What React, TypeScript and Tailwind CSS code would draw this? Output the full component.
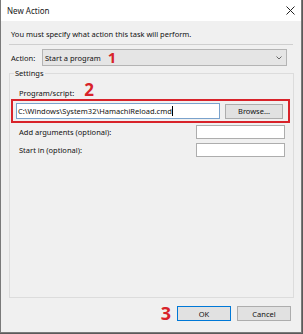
import React from 'react';

const font = { fontFamily: '"Noto Sans", "Open Sans", sans-serif' };

function CloseIcon() {
    return (
        <svg width="9" height="9" viewBox="0 0 9 9" className="block">
            <path d="M0.5 0.5 L8.5 8.5 M8.5 0.5 L0.5 8.5" stroke="#222" strokeWidth="1" fill="none" />
        </svg>
    );
}

function Chevron() {
    return (
        <svg width="6" height="4" viewBox="0 0 6 4" className="block">
            <path d="M0.5 0.5 L3 3 L5.5 0.5" stroke="#666" strokeWidth="1" fill="none" />
        </svg>
    );
}

export default function App() {
    return (
        <div className="w-[303px] h-[334px] bg-[#5a5a5a] overflow-hidden text-[7.5px] text-[#111] leading-[10px]" style={font}>
            <div className="w-[302px] h-[333px] flex flex-col border border-t-0 border-[#7a7a7a] bg-[#f0f0f0]">
                {/* Title bar */}
                <div className="h-[21px] bg-white flex items-center justify-between pl-[6px] pr-[6px] shrink-0">
                    <span className="text-[8px] text-[#1a1a1a]">New Action</span>
                    <CloseIcon />
                </div>

                <div className="flex-1 flex flex-col pl-[8px] pr-[7px]">
                    <p className="pt-[8px] pl-[2px]">You must specify what action this task will perform.</p>
                    <div className="mt-[5px] h-px bg-[#cfcfcf] mr-[1px]" />

                    {/* Action */}
                    <div className="mt-[4px] flex items-center">
                        <span className="pl-[2px] w-[33px]">Action:</span>
                        <div className="w-[245px] h-[17px] bg-[#e5e5e5] border border-[#b4b4b4] flex items-center pl-[2px] pr-[4px]">
                            <span>Start a program</span>
                            <span className="ml-[7px] text-[15px] font-bold text-[#d8232a] leading-none">1</span>
                            <span className="ml-auto"><Chevron /></span>
                        </div>
                    </div>

                    {/* Settings group */}
                    <fieldset className="mt-[2px] h-[230px] border border-[#dcdcdc] flex flex-col">
                        <legend className="ml-[4px] px-[1px] leading-[10px]">Settings</legend>

                        <div className="mt-[4px] pl-[9px] flex items-baseline">
                            <span>Program/script:</span>
                            <span className="ml-[10px] text-[17px] font-bold text-[#d8232a] leading-[16px]">2</span>
                        </div>

                        <div className="mt-[1px] ml-[1px] mr-[3px] h-[24px] border-2 border-[#d8232a] flex items-center pl-[3px] pr-[4px] gap-[5px]">
                            <div className="w-[204px] h-[16px] bg-white border border-[#7aa2cc] flex items-center pl-[1px]">
                                <span>C:\Windows\System32\HamachiReload.cmd</span>
                                <span className="w-px h-[10px] bg-black" />
                            </div>
                            <button className="w-[58px] h-[15px] bg-[#e1e1e1] border border-[#adadad] flex items-center justify-center text-[7.5px] leading-[10px]">
                                Browse...
                            </button>
                        </div>

                        <div className="mt-[2px] pl-[9px] pr-[8px] flex items-center justify-between">
                            <span>Add arguments (optional):</span>
                            <div className="w-[89px] h-[14px] bg-white border border-[#adadad]" />
                        </div>

                        <div className="mt-[4px] pl-[9px] pr-[8px] flex items-center justify-between">
                            <span>Start in (optional):</span>
                            <div className="w-[89px] h-[14px] bg-white border border-[#adadad]" />
                        </div>
                    </fieldset>

                    {/* Buttons */}
                    <div className="mt-[8px] pr-[3px] flex items-center justify-end">
                        <span className="text-[18px] font-bold text-[#d8232a] leading-[15px] mr-[6px]">3</span>
                        <button className="w-[54px] h-[15px] bg-[#e1e1e1] border border-[#0078d7] flex items-center justify-center text-[7.5px] leading-[10px]">
                            OK
                        </button>
                        <button className="ml-[6px] w-[54px] h-[15px] bg-[#e1e1e1] border border-[#adadad] flex items-center justify-center text-[7.5px] leading-[10px]">
                            Cancel
                        </button>
                    </div>
                </div>
            </div>
        </div>
    );
}
